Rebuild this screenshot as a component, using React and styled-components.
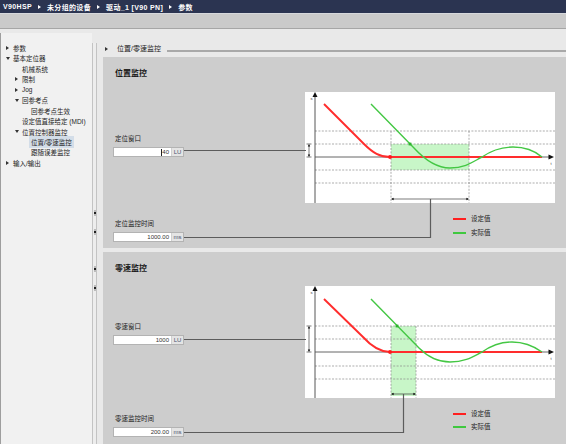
import React from 'react'
import styled, { createGlobalStyle } from 'styled-components'

const GlobalStyle = createGlobalStyle`
  html, body { margin:0; padding:0; }
  body {
    width:566px;
    height:444px;
    overflow:hidden;
    background:#e9e9e9;
    font-family:"Liberation Sans","Noto Sans CJK SC",sans-serif;
  }
`

const crumbs = ['V90HSP', '未分组的设备', '驱动_1 [V90 PN]', '参数']

const tree = [
  { level: 0, label: '参数', arrow: 'right' },
  { level: 0, label: '基本定位器', arrow: 'down' },
  { level: 1, label: '机械系统' },
  { level: 1, label: '限制', arrow: 'right' },
  { level: 1, label: 'Jog', arrow: 'right' },
  { level: 1, label: '回参考点', arrow: 'down' },
  { level: 2, label: '回参考点生效' },
  { level: 1, label: '设定值直接给定 (MDI)' },
  { level: 1, label: '位置控制器监控', arrow: 'down' },
  { level: 2, label: '位置/零速监控', selected: true },
  { level: 2, label: '跟随误差监控' },
  { level: 0, label: '输入/输出', arrow: 'right' },
]

// chart geometry in page coordinates
const charts = [
  {
    top: 57, h: 191,
    chartTop: 92, chartBottom: 203, axisY: 157,
    dashes: [131, 144, 170, 183],
    vx: [391, 469],
    rect: [391, 144, 78, 26],
    red: 'M324,104 L364,144 C373,153 380,157 390,157 L542,157',
    green: 'M371,104 L414,148 C425,160 437,168 450,168 C466,168 474,161 482,157 C492,150 502,147 513,147 C526,147 535,151 542,157',
    greenDot: [410, 144],
    win: [144, 157], winY: 150.5,
    timeY: 199, timeX: 430.5,
    lineY: 237.5,
    legendY: [219, 233],
  },
  {
    top: 252, h: 192,
    chartTop: 286, chartBottom: 398, axisY: 352,
    dashes: [326, 339, 366, 379],
    vx: [391, 416],
    rect: [391, 326, 25, 70],
    red: 'M324,299 L363,337 C372,347 380,352 390,352 L542,352',
    green: 'M371,299 L419,348 C428,357 438,362 450,362 C466,362 474,356 482,352 C492,345 502,342 512,342 C525,342 535,347 542,352',
    greenDot: [397, 326],
    win: [326, 352], winY: 339.5,
    timeY: 394, timeX: 403.5,
    lineY: 432.5,
    legendY: [414, 427],
  },
]

const Diagram = ({ d }) => {
  const [x1, x2] = d.vx
  const ink = '#5c5c5c'
  return (
    <Svg width="372" height={d.h} viewBox={`184 ${d.top} 372 ${d.h}`}>
      <rect x="305" y={d.chartTop} width="250" height={d.chartBottom - d.chartTop} fill="#fff" />
      <rect x={d.rect[0]} y={d.rect[1]} width={d.rect[2]} height={d.rect[3]} fill="#c8f6c8" />
      {d.dashes.map(y => (
        <line key={y} x1="315" x2="555" y1={y} y2={y} stroke="#8a8a8a" strokeWidth="0.7" strokeDasharray="2 1.4" />
      ))}
      {d.vx.map(x => (
        <line key={x} x1={x} x2={x} y1={d.dashes[0]} y2={d.chartBottom} stroke="#8a8a8a" strokeWidth="0.7" strokeDasharray="2 1.4" />
      ))}
      {/* axes */}
      <line x1="315" x2="315" y1={d.chartBottom} y2={d.chartTop + 4} stroke="#444" strokeWidth="0.9" />
      <polygon points={`315,${d.chartTop} 312.5,${d.chartTop + 5} 317.5,${d.chartTop + 5}`} fill="#111" />
      <text x="310.5" y={d.chartTop + 8} fontSize="4" fill="#333">s</text>
      <line x1="315" x2="549" y1={d.axisY} y2={d.axisY} stroke="#555" strokeWidth="0.9" />
      <polygon points={`554,${d.axisY} 548.5,${d.axisY - 2.5} 548.5,${d.axisY + 2.5}`} fill="#111" />
      <text x="550.5" y={d.axisY + 8} fontSize="4" fill="#333">t</text>
      {/* curves */}
      <path d={d.red} fill="none" stroke="#ff2d2d" strokeWidth="1.9" />
      <path d={d.green} fill="none" stroke="#44c744" strokeWidth="1.4" />
      <circle cx="390" cy={d.axisY} r="1.9" fill="#ff1a1a" />
      <rect x={d.greenDot[0] - 1.4} y={d.greenDot[1] - 1.4} width="2.8" height="2.8" fill="#2db52d" />
      {/* window bracket */}
      <line x1="184" x2="306" y1={d.winY} y2={d.winY} stroke={ink} strokeWidth="1.2" />
      <line x1="309" x2="309" y1={d.win[0] + 1} y2={d.win[1] - 1} stroke="#222" strokeWidth="0.6" />
      <line x1="306.5" x2="311.5" y1={d.win[0]} y2={d.win[0]} stroke="#222" strokeWidth="0.6" />
      <line x1="306.5" x2="311.5" y1={d.win[1]} y2={d.win[1]} stroke="#222" strokeWidth="0.6" />
      <polygon points={`309,${d.win[0]} 307.8,${d.win[0] + 2.6} 310.2,${d.win[0] + 2.6}`} fill="#111" />
      <polygon points={`309,${d.win[1]} 307.8,${d.win[1] - 2.6} 310.2,${d.win[1] - 2.6}`} fill="#111" />
      {/* time bracket */}
      <line x1={x1 + 1} x2={x2 - 1} y1={d.timeY} y2={d.timeY} stroke="#222" strokeWidth="0.6" />
      <polygon points={`${x1},${d.timeY} ${x1 + 2.6},${d.timeY - 1.2} ${x1 + 2.6},${d.timeY + 1.2}`} fill="#111" />
      <polygon points={`${x2},${d.timeY} ${x2 - 2.6},${d.timeY - 1.2} ${x2 - 2.6},${d.timeY + 1.2}`} fill="#111" />
      <path d={`M184,${d.lineY} H${d.timeX} V${d.timeY}`} fill="none" stroke={ink} strokeWidth="1.2" />
      {/* legend */}
      <line x1="453" x2="466" y1={d.legendY[0]} y2={d.legendY[0]} stroke="#ff2020" strokeWidth="2" />
      <text x="471" y={d.legendY[0] + 2.3} fontSize="6.5" fill="#222">设定值</text>
      <line x1="453" x2="466" y1={d.legendY[1]} y2={d.legendY[1]} stroke="#3fc83f" strokeWidth="2" />
      <text x="471" y={d.legendY[1] + 2.3} fontSize="6.5" fill="#222">实际值</text>
    </Svg>
  )
}

const App = () => {
  return (
    <Page>
      <GlobalStyle />
      <TitleBar>
        {crumbs.map((c, i) => (
          <React.Fragment key={c}>
            {i > 0 && <CrumbSep />}
            <span>{c}</span>
          </React.Fragment>
        ))}
      </TitleBar>
      <Toolbar />
      <Body>
        <Sidebar>
          {tree.map(item => (
            <TreeRow key={item.label} $level={item.level}>
              <ArrowSlot>{item.arrow && <Arrow $dir={item.arrow} />}</ArrowSlot>
              <TreeLabel $selected={item.selected}>{item.label}</TreeLabel>
            </TreeRow>
          ))}
        </Sidebar>
        <Splitter>
          <Grip $mt={167} />
          <Grip $mt={13} />
          <Grip $mt={31} />
          <Grip $mt={13} />
        </Splitter>
        <Content>
          <SectionHeader>
            <Arrow $dir="right" />
            <SectionTitle>位置/零速监控</SectionTitle>
            <Rule />
          </SectionHeader>

          <Panel $h={191}>
            <Controls>
              <PanelTitle>位置监控</PanelTitle>
              <FieldGroup $mt={56}>
                <FieldLabel>定位窗口</FieldLabel>
                <Field>
                  <Value><Cursor />40</Value>
                  <Unit>LU</Unit>
                </Field>
              </FieldGroup>
              <FieldGroup $mt={63}>
                <FieldLabel>定位监控时间</FieldLabel>
                <Field>
                  <Value>1000.00</Value>
                  <Unit>ms</Unit>
                </Field>
              </FieldGroup>
            </Controls>
            <Diagram d={charts[0]} />
          </Panel>

          <Panel $h={192} $gap>
            <Controls>
              <PanelTitle>零速监控</PanelTitle>
              <FieldGroup $mt={49}>
                <FieldLabel>零速窗口</FieldLabel>
                <Field>
                  <Value>1000</Value>
                  <Unit>LU</Unit>
                </Field>
              </FieldGroup>
              <FieldGroup $mt={70}>
                <FieldLabel>零速监控时间</FieldLabel>
                <Field>
                  <Value>200.00</Value>
                  <Unit>ms</Unit>
                </Field>
              </FieldGroup>
            </Controls>
            <Diagram d={charts[1]} />
          </Panel>
        </Content>
      </Body>
    </Page>
  )
}

export default App

const Page = styled.div`
width:566px;
height:444px;
overflow:hidden;
display:flex;
flex-direction:column;
`
const TitleBar = styled.div`
height:13px;
flex-shrink:0;
background:#2b3451;
border-bottom:1px solid #d6d8dc;
color:#fff;
font-size:7px;
font-weight:600;
letter-spacing:0.35px;
display:flex;
align-items:center;
gap:5px;
padding-left:3px;
white-space:nowrap;
`
const CrumbSep = styled.span`
width:0;
height:0;
border-top:2px solid transparent;
border-bottom:2px solid transparent;
border-left:3px solid #fff;
margin:0 1px;
`
const Toolbar = styled.div`
height:14px;
flex-shrink:0;
background:#cacaca;
border-bottom:1px solid #a6a6a6;
`
const Body = styled.div`
flex:1;
display:flex;
background:#e9e9e9;
min-height:0;
`
const Sidebar = styled.div`
width:91px;
margin-top:4px;
border-left:1px solid #9e9e9e;
background:#f1f1f1;
padding-top:9.8px;
flex-shrink:0;
`
const TreeRow = styled.div`
height:10.45px;
display:flex;
align-items:center;
padding-left:${({ $level }) => 5 + $level * 9}px;
font-size:6.5px;
color:#1e1e1e;
white-space:nowrap;
`
const ArrowSlot = styled.span`
width:7px;
flex-shrink:0;
display:flex;
align-items:center;
`
const Arrow = styled.span`
width:0;
height:0;
${({ $dir }) => $dir === 'down'
    ? `border-left:2px solid transparent;
       border-right:2px solid transparent;
       border-top:3px solid #333;`
    : `border-top:2px solid transparent;
       border-bottom:2px solid transparent;
       border-left:3px solid #333;`}
`
const TreeLabel = styled.span`
padding:1px 2px;
margin-left:-2px;
background:${({ $selected }) => $selected ? '#d3dde8' : 'transparent'};
`
const Splitter = styled.div`
width:3px;
margin-top:14px;
border-left:1px solid #c3c3c3;
border-right:1px solid #c3c3c3;
background:#ededed;
display:flex;
flex-direction:column;
align-items:center;
flex-shrink:0;
`
const Grip = styled.span`
margin-top:${({ $mt }) => $mt}px;
width:2px;
height:6px;
background:linear-gradient(#bbb 0 2px, #222 2px 4px, #bbb 4px 6px);
`
const Content = styled.div`
flex:1;
margin-top:14px;
padding-left:6px;
display:flex;
flex-direction:column;
min-width:0;
`
const SectionHeader = styled.div`
height:14px;
flex-shrink:0;
display:flex;
align-items:flex-start;
padding-left:2px;
padding-top:2px;
box-sizing:border-box;
span:first-child { margin-top:2px; }
`
const SectionTitle = styled.span`
font-size:7px;
line-height:8px;
color:#222;
margin-left:9px;
white-space:nowrap;
`
const Rule = styled.span`
flex:1;
height:2px;
margin-top:5px;
margin-left:6px;
background:#a9a9a9;
`
const Panel = styled.div`
height:${({ $h }) => $h}px;
flex-shrink:0;
margin-top:${({ $gap }) => $gap ? '4px' : '0'};
background:#cdcdcd;
display:flex;
`
const Controls = styled.div`
width:71px;
margin-left:10px;
display:flex;
flex-direction:column;
flex-shrink:0;
`
const PanelTitle = styled.div`
margin-top:12px;
margin-left:2px;
height:10px;
line-height:10px;
font-size:8px;
font-weight:bold;
color:#1a1a1a;
`
const FieldGroup = styled.div`
margin-top:${({ $mt }) => $mt}px;
display:flex;
flex-direction:column;
gap:4px;
`
const FieldLabel = styled.div`
height:8px;
line-height:8px;
font-size:6.5px;
color:#222;
margin-left:2px;
white-space:nowrap;
`
const Field = styled.div`
height:10px;
box-sizing:border-box;
border:1px solid #b3b3b3;
background:#fff;
display:flex;
font-size:6px;
color:#333;
`
const Value = styled.span`
flex:1;
display:flex;
align-items:center;
justify-content:flex-end;
padding-right:2px;
`
const Cursor = styled.span`
width:0.7px;
height:7px;
background:#222;
margin-right:1px;
`
const Unit = styled.span`
width:11px;
display:flex;
align-items:center;
justify-content:center;
background:#e4e4e4;
border-left:1px solid #d0d0d0;
color:#4a5570;
`
const Svg = styled.svg`
display:block;
flex-shrink:0;
font-family:"Liberation Sans","Noto Sans CJK SC",sans-serif;
`
